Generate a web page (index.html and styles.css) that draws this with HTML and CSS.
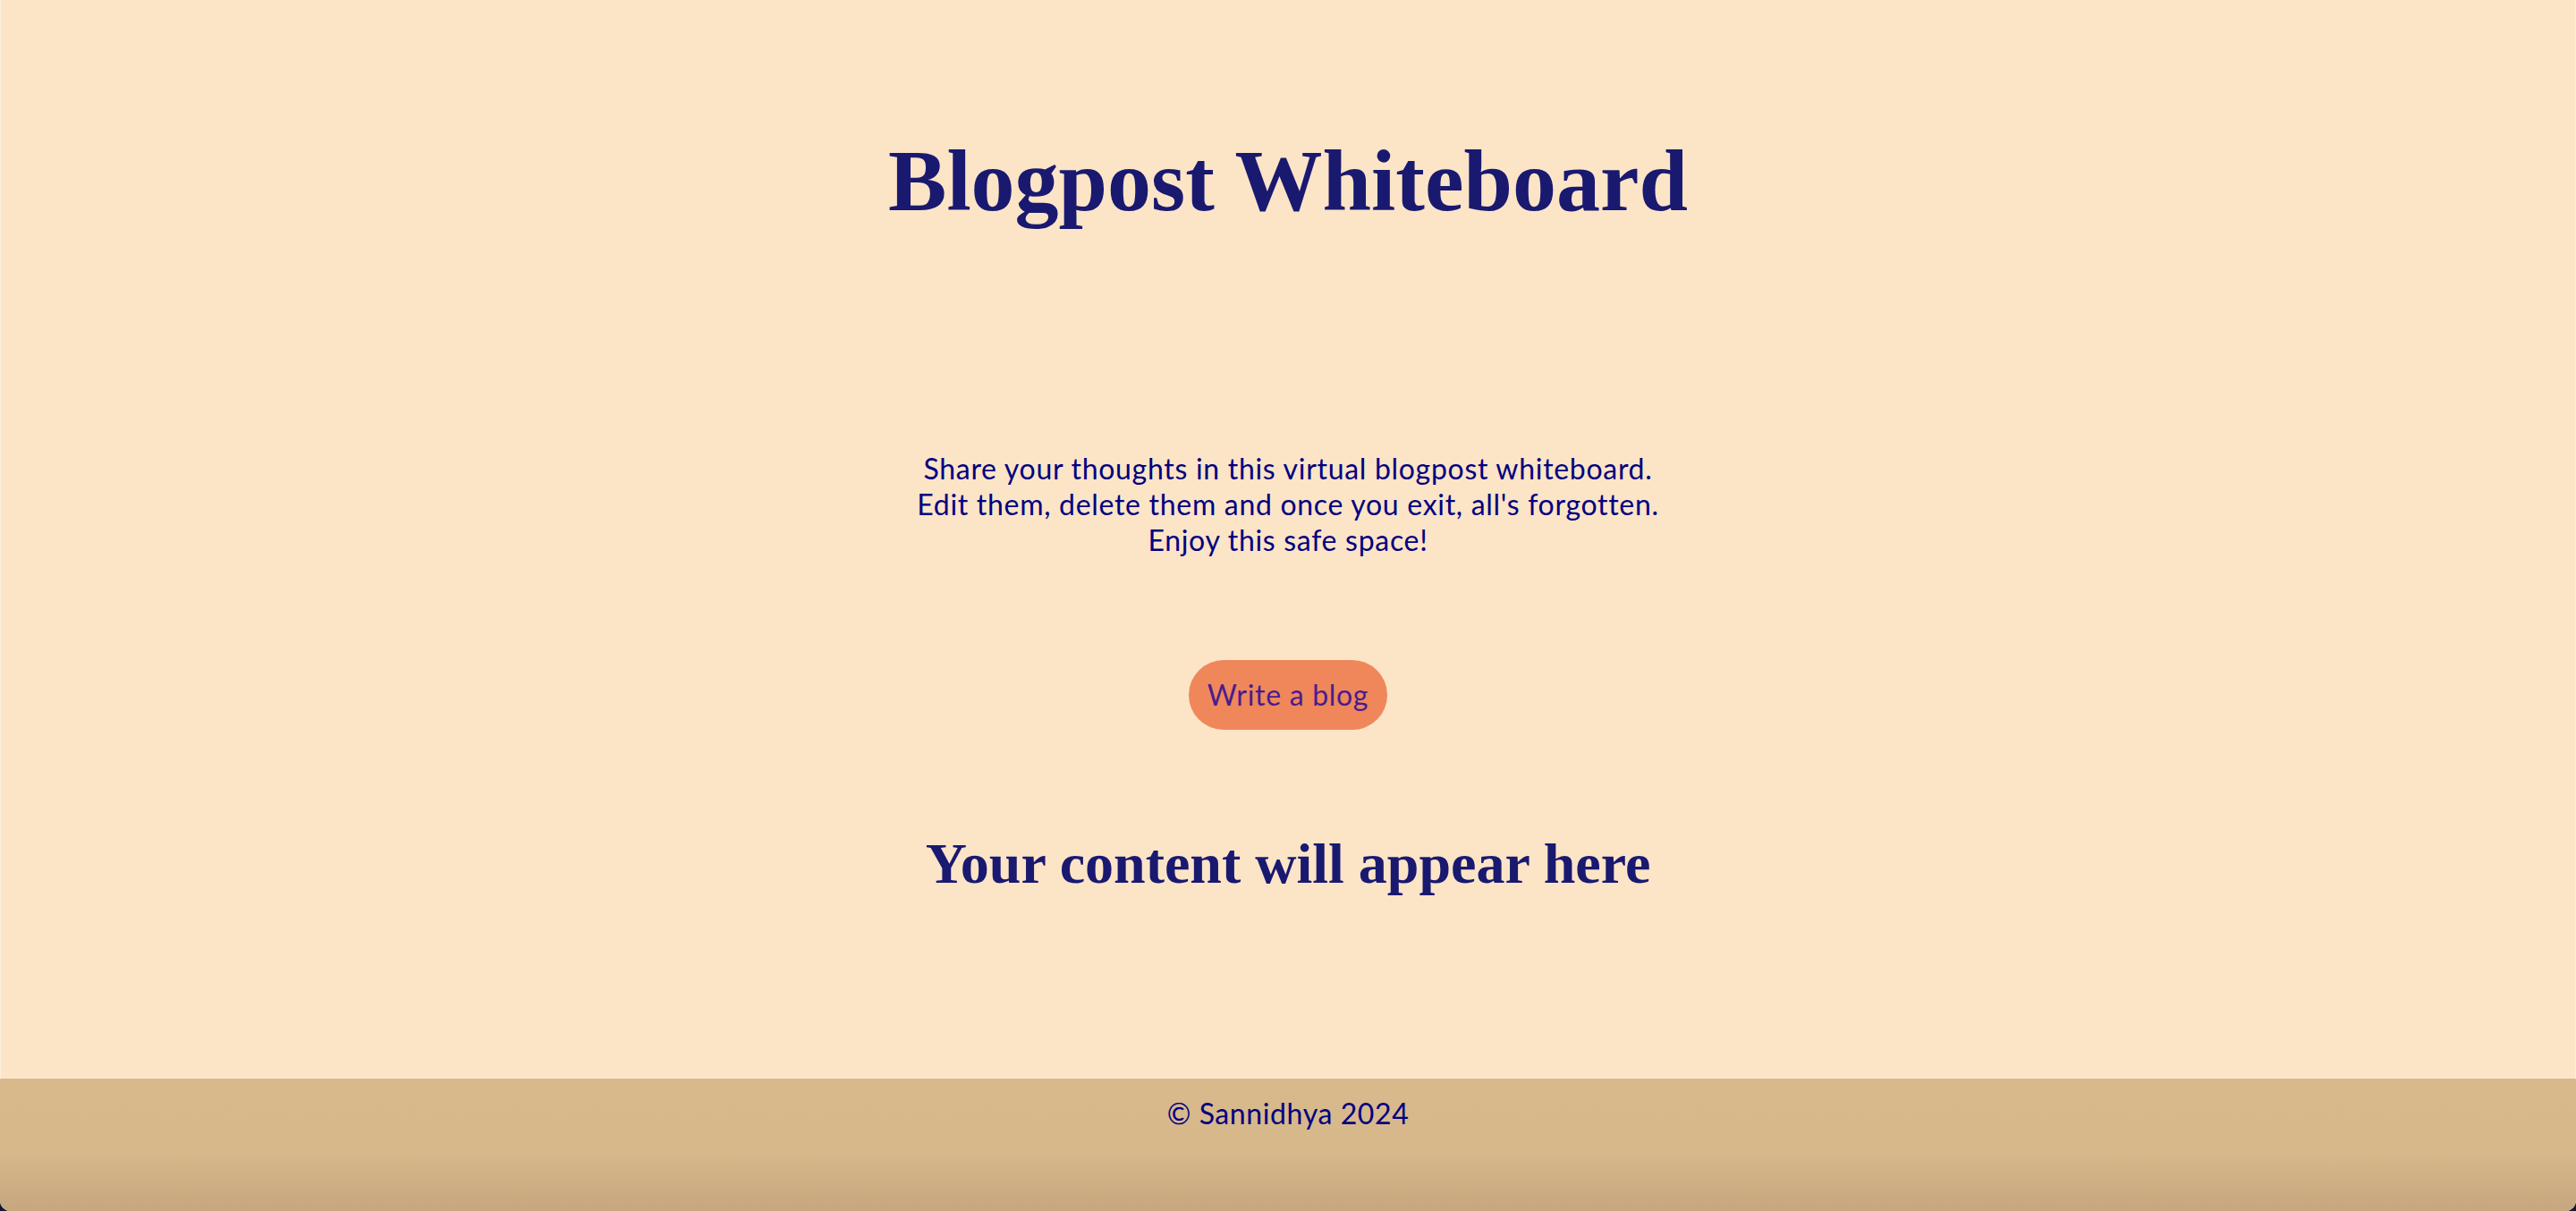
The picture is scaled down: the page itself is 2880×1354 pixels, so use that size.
FILE: index.html
```html
<!DOCTYPE html>
<html lang="en">
<head>
<meta charset="utf-8">
<title>Blogpost Whiteboard</title>
<link rel="stylesheet" href="styles.css">
</head>
<body>
<div class="page">
  <main class="main">
    <h1 class="title">Blogpost Whiteboard</h1>
    <p class="intro">Share your thoughts in this virtual blogpost whiteboard.<br>Edit them, delete them and once you exit, all's forgotten.<br>Enjoy this safe space!</p>
    <button class="write-btn" type="button">Write a blog</button>
    <h2 class="placeholder">Your content will appear here</h2>
  </main>
  <footer class="footer">
    <p class="copy">© Sannidhya 2024</p>
  </footer>
</div>
</body>
</html>
```
FILE: styles.css
```css
html {
  background: #17172f;
}
body {
  margin: 0;
  font-family: "Lato", "Noto Sans", sans-serif;
}
.page {
  min-height: 100vh;
  display: flex;
  flex-direction: column;
  background: #fce4c7;
  border-radius: 0 0 12px 12px;
  overflow: hidden;
  box-shadow: inset 1px 0 0 rgba(255,255,255,0.45), inset -1px 0 0 rgba(255,255,255,0.45);
}
.main {
  flex: 1;
  display: flex;
  flex-direction: column;
  align-items: center;
  padding-top: 153px;
  text-align: center;
}
.title {
  margin: 0;
  font-family: "Liberation Serif", "Times New Roman", serif;
  font-weight: 700;
  font-size: 98px;
  line-height: 98px;
  color: #191970;
}
.intro {
  margin: 253px 0 0;
  font-size: 32px;
  line-height: 40px;
  letter-spacing: 0.7px;
  color: #000080;
}
.write-btn {
  margin-top: 114px;
  border: none;
  background: #ef875b;
  color: #4a1c8e;
  font-family: "Lato", "Noto Sans", sans-serif;
  font-size: 32px;
  line-height: 40px;
  letter-spacing: 0.7px;
  padding: 19px 21px;
  border-radius: 40px;
}
.placeholder {
  margin: 113px 0 0;
  font-family: "Liberation Serif", "Times New Roman", serif;
  font-weight: 700;
  font-size: 64px;
  line-height: 74px;
  color: #191970;
}
.footer {
  height: 148px;
  box-sizing: border-box;
  padding-top: 19px;
  text-align: center;
  background: linear-gradient(to bottom, #d8b98c 0, #d7b88b 55%, #c6a77e 100%);
}
.copy {
  margin: 0;
  font-size: 32px;
  line-height: 40px;
  letter-spacing: 0.6px;
  color: #000080;
}
```
